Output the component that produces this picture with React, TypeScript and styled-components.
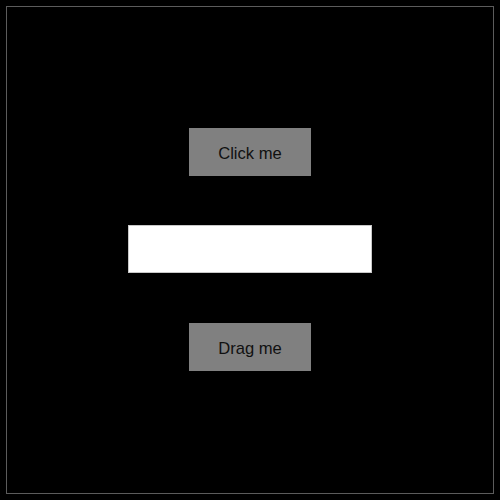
import React from 'react';
import styled, { createGlobalStyle } from 'styled-components';

const Global = createGlobalStyle`
    html, body {
        margin: 0;
        padding: 0;
        background: #000;
        font-family: "Liberation Sans", Arial, sans-serif;
    }
`;

const Page = styled.div`
    width: 500px;
    height: 500px;
    padding: 6px;
    box-sizing: border-box;
    background: #000;
`;

const Frame = styled.div`
    width: 100%;
    height: 100%;
    box-sizing: border-box;
    border: 1px solid #5c5c5c;
    padding-bottom: 1px;
    display: flex;
    flex-direction: column;
    align-items: center;
    justify-content: center;
    gap: 49px;
`;

const Button = styled.button`
    width: 122px;
    height: 48px;
    box-sizing: border-box;
    border: none;
    background: #808080;
    color: #111;
    font-family: "Liberation Sans", Arial, sans-serif;
    font-size: 16.6px;
    padding: 4px 0 0;
    cursor: pointer;
`;

const Field = styled.input`
    width: 244px;
    height: 48px;
    box-sizing: border-box;
    border: 1px solid #c8c8c8;
    background: #fff;
    outline: none;
    margin: 0 0 1px;
`;

export default function App() {
    return (
        <Page>
            <Global />
            <Frame>
                <Button>Click me</Button>
                <Field type="text" />
                <Button>Drag me</Button>
            </Frame>
        </Page>
    );
}
